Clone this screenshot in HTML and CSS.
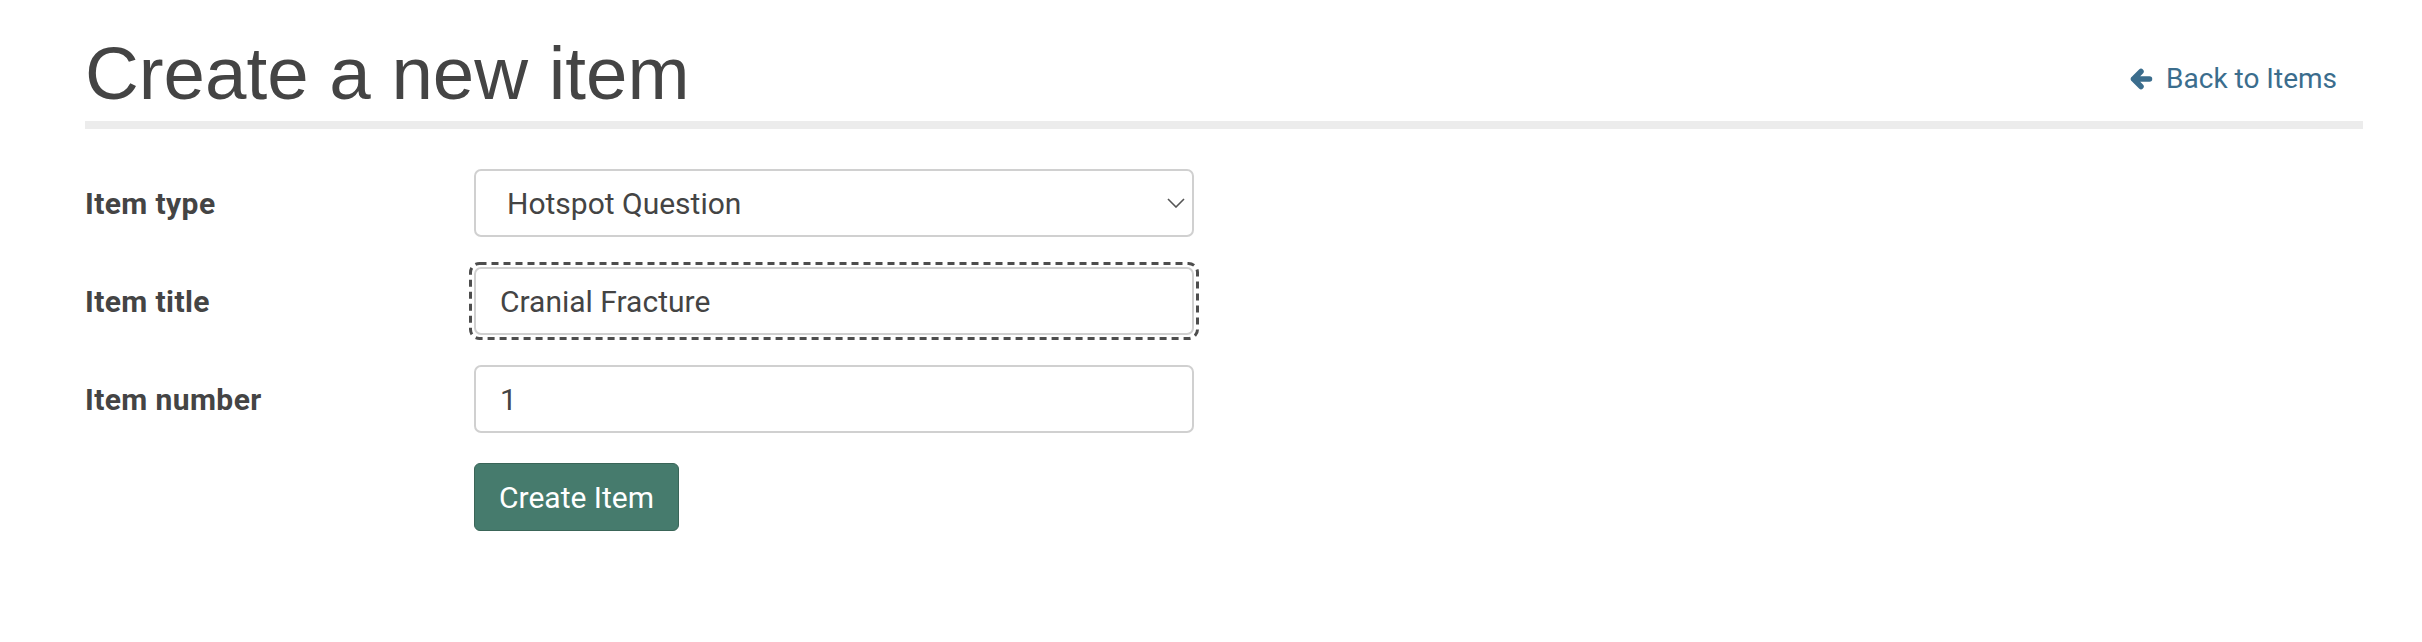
FILE: index.html
```html
<!DOCTYPE html>
<html lang="en">
    <head>
        <meta charset="UTF-8" />
        <meta name="viewport" content="width=device-width, initial-scale=1.0" />
        <title>Create a new item</title>
        <link rel="stylesheet" href="styles.css">
    </head>

    <body>
        <div class="page">
            <div class="page-header">
                <h1>Create a new item</h1>
                <a class="back-link" href="#">
                    <svg class="back-icon" viewBox="0 0 24 24" width="24" height="24">
                        <path d="M12 4.5L4.5 12l7.5 7.5M4.5 12H20.5" fill="none" stroke="currentColor" stroke-width="5.5" stroke-linecap="round" stroke-linejoin="round"/>
                    </svg>
                    Back to Items
                </a>
            </div>

            <form class="item-form">
                <label class="form-label" for="item-type">Item type</label>
                <div class="select-wrap">
                    <select id="item-type" class="form-field form-select">
                        <option>Hotspot Question</option>
                        <option>Multiple Choice Question</option>
                        <option>Free Text Question</option>
                    </select>
                    <svg class="select-arrow" viewBox="0 0 18 10" width="18" height="10">
                        <path d="M1 1l8 8 8-8" fill="none" stroke="currentColor" stroke-width="1.6"/>
                    </svg>
                </div>

                <label class="form-label" for="item-title">Item title</label>
                <div class="focus-wrap">
                    <input id="item-title" class="form-field" type="text" value="Cranial Fracture">
                    <svg class="focus-ring">
                        <rect class="focus-ring-line" />
                    </svg>
                </div>

                <label class="form-label" for="item-number">Item number</label>
                <input id="item-number" class="form-field" type="text" value="1">

                <div></div>
                <div>
                    <button class="btn-create" type="submit">Create Item</button>
                </div>
            </form>
        </div>
    </body>
</html>
```

FILE: styles.css
```css
* {
    padding: 0;
    margin: 0;
    box-sizing: border-box;
}

body {
    font-family: Roboto, "Liberation Sans", sans-serif;
    color: #444;
    background-color: #fff;
}

.page {
    width: 2278px;
    margin-left: 85px;
}

.page-header {
    display: flex;
    justify-content: space-between;
    align-items: flex-end;
    padding: 36px 26px 10px 0;
    border-bottom: 8px solid #ececec;
}

.page-header h1 {
    font-family: "Liberation Sans", Arial, sans-serif;
    font-size: 74.5px;
    font-weight: 400;
    line-height: 75px;
    color: #444;
}

.back-link {
    display: flex;
    align-items: center;
    gap: 13px;
    margin-bottom: 15px;
    font-size: 28px;
    line-height: 34px;
    color: #3b6d8d;
    text-decoration: none;
}

.back-icon {
    display: block;
}

.item-form {
    display: grid;
    grid-template-columns: 389px 720px;
    row-gap: 30px;
    align-items: center;
    margin-top: 40px;
}

.form-label {
    font-size: 30px;
    font-weight: 700;
    letter-spacing: 0.4px;
    color: #444;
}

.form-field {
    display: block;
    width: 720px;
    height: 68px;
    padding: 0 24px;
    border: 2px solid #d0d0d0;
    border-radius: 7px;
    background-color: #fff;
    font-family: Roboto, "Liberation Sans", sans-serif;
    font-size: 30px;
    color: #444;
}

.form-field:focus {
    outline: none;
}

.focus-wrap {
    position: relative;
}

.focus-ring {
    position: absolute;
    top: -5px;
    left: -5px;
    width: calc(100% + 10px);
    height: calc(100% + 10px);
    pointer-events: none;
}

.focus-ring-line {
    x: 1.5px;
    y: 1.5px;
    width: calc(100% - 3px);
    height: calc(100% - 3px);
    rx: 9px;
    fill: none;
    stroke: #4d4d4d;
    stroke-width: 3px;
    stroke-dasharray: 7 5;
}

.select-wrap {
    position: relative;
}

.form-select {
    appearance: none;
    padding-left: 31px;
}

.select-arrow {
    position: absolute;
    top: 29px;
    right: 9px;
    color: #555;
}

.btn-create {
    height: 68px;
    padding: 0 24px;
    border: 1px solid #3a6558;
    border-radius: 6px;
    background-color: #467b6d;
    font-family: Roboto, "Liberation Sans", sans-serif;
    font-size: 30px;
    color: #fff;
    cursor: pointer;
}
```
